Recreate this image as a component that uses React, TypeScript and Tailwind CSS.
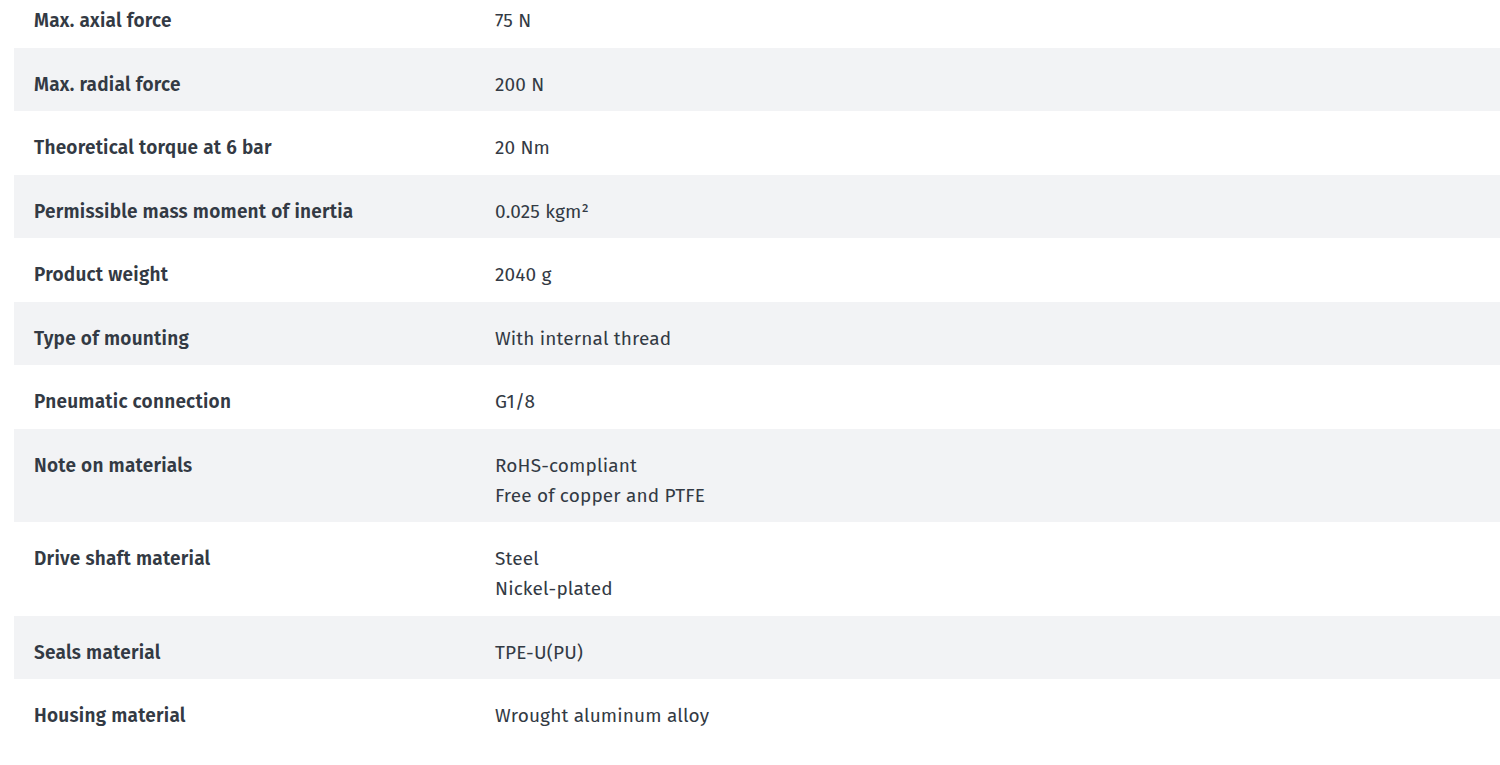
import React from "react";

const rows: { label: string; value: string[] }[] = [
  { label: "Max. axial force", value: ["75 N"] },
  { label: "Max. radial force", value: ["200 N"] },
  { label: "Theoretical torque at 6 bar", value: ["20 Nm"] },
  { label: "Permissible mass moment of inertia", value: ["0.025 kgm²"] },
  { label: "Product weight", value: ["2040 g"] },
  { label: "Type of mounting", value: ["With internal thread"] },
  { label: "Pneumatic connection", value: ["G1/8"] },
  { label: "Note on materials", value: ["RoHS-compliant", "Free of copper and PTFE"] },
  { label: "Drive shaft material", value: ["Steel", "Nickel-plated"] },
  { label: "Seals material", value: ["TPE-U(PU)"] },
  { label: "Housing material", value: ["Wrought aluminum alloy"] },
];

export default function App() {
  return (
    <div
      className="w-[1500px] h-[765px] overflow-hidden bg-white text-[#333a44]"
      style={{ fontFamily: "'Fira Sans', Roboto, 'Noto Sans', sans-serif" }}
    >
      <div className="mt-[-16px] ml-[14px]">
        {rows.map((r, i) => (
          <div
            key={r.label}
            className={`grid grid-cols-[481px_1fr] pt-[22px] pb-[11.5px] ${
              i % 2 === 1 ? "bg-[#f2f3f5]" : "bg-white"
            }`}
          >
            <div className="pl-[20px] text-[19px] leading-[30px] font-semibold tracking-[0.25px]">
              {r.label}
            </div>
            <div className="text-[19px] leading-[30px] tracking-[0.15px]">
              {r.value.map((v) => (
                <div key={v}>{v}</div>
              ))}
            </div>
          </div>
        ))}
      </div>
    </div>
  );
}
